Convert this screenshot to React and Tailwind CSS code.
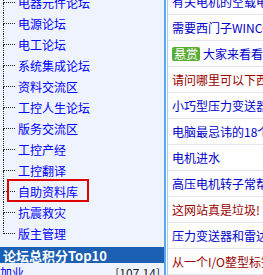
import React from 'react';

const forums = [
  '电器元件论坛',
  '电源论坛',
  '电工论坛',
  '系统集成论坛',
  '资料交流区',
  '工控人生论坛',
  '版务交流区',
  '工控产经',
  '工控翻译',
  '自助资料库',
  '抗震救灾',
  '版主管理',
];

const topics = [
  { text: '有关电机的空载电流问题', color: 'text-[#0000cc]' },
  { text: '需要西门子WINCC的资料', color: 'text-[#0000cc]' },
  { text: '大家来看看这个问题', color: 'text-[#0000cc]', badge: true },
  { text: '请问哪里可以下西门子软件', color: 'text-[#990000]' },
  { text: '小巧型压力变送器', color: 'text-[#0000cc]' },
  { text: '电脑最忌讳的18个小动作', color: 'text-[#0000cc]' },
  { text: '电机进水', color: 'text-[#0000cc]' },
  { text: '高压电机转子常帮问题', color: 'text-[#0000cc]' },
  { text: '这网站真是垃圾!', color: 'text-[#990000]' },
  { text: '压力变送器和雷达物位计', color: 'text-[#0000cc]' },
  { text: '从一个I/O整型标签说起', color: 'text-[#990000]' },
];

function TreeRow({ name, last, marked }) {
  return (
    <div className="relative flex h-[21px] items-stretch">
      <div className="ml-[3px] flex w-[12px] flex-col">
        <div className="h-[11px] border-b border-l border-dotted border-[#222]" />
        <div className={last ? 'flex-1' : 'flex-1 border-l border-dotted border-[#222]'} />
      </div>
      <span className="ml-[3px] flex items-center text-[12px] leading-none text-[#0000ff]">{name}</span>
      {marked && (
        <div className="pointer-events-none absolute left-[7px] top-[-2px] h-[23px] w-[82px] border-2 border-[#e00000]" />
      )}
    </div>
  );
}

export default function App() {
  return (
    <div
      className="flex h-[275px] w-[263px] overflow-hidden bg-white"
      style={{ fontFamily: '"Noto Sans CJK SC", "Liberation Sans", sans-serif' }}
    >
      <div className="flex w-[166px] shrink-0 flex-col border-r-2 border-[#5ba7ef] bg-[#eef3fe]">
        <div className="-mt-[8px]">
          {forums.map((f, i) => (
            <TreeRow key={f} name={f} last={i === forums.length - 1} marked={f === '自助资料库'} />
          ))}
        </div>
        <div className="mt-[3px] flex h-[16px] shrink-0 items-center bg-[#1b60b2] pl-[3px] text-[13px] font-bold leading-none text-white">
          论坛总积分Top10
        </div>
        <div className="mt-[3px] flex shrink-0 items-center justify-between pr-[4px] text-[12px] leading-[14px]">
          <span className="text-[#0000ff]">加业</span>
          <span className="text-[#222]">[107.14]</span>
        </div>
      </div>
      <div className="ml-[1px] flex min-w-0 flex-1 flex-col border-l border-[#a9cdf3]">
        <div className="-mt-[11px]">
          {topics.map((t) => (
            <div
              key={t.text}
              className="flex h-[26px] items-center whitespace-nowrap border-b border-[#e3e8f0] pl-[4px] text-[12px] leading-none"
            >
              {t.badge && (
                <span className="mr-[3px] rounded-[2px] bg-[#5cac3a] px-[2px] py-[1px] text-white">悬赏</span>
              )}
              <span className={t.color}>{t.text}</span>
            </div>
          ))}
        </div>
      </div>
    </div>
  );
}
